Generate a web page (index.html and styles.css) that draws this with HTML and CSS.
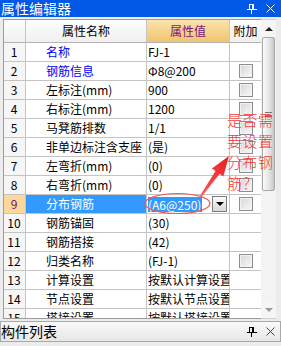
FILE: index.html
```html
<!DOCTYPE html>
<html lang="zh-CN">
<head>
  <meta charset="UTF-8">
  <title>属性编辑器</title>
  <link rel="stylesheet" href="styles.css">
</head>
<body>
  <!--TITLE BAR-->
  <div class="titlebar">
    <span class="title">属性编辑器</span>
    <div class="tools">
      <svg class="pin" width="10" height="10" viewBox="0 0 10 10">
        <rect x="2.5" y="0.5" width="4" height="5" fill="none" stroke="#fff"/>
        <rect x="5" y="0" width="2" height="6" fill="#fff"/>
        <rect x="0" y="5" width="10" height="1" fill="#fff"/>
        <rect x="4" y="6" width="1" height="4" fill="#fff"/>
      </svg>
      <svg class="close" width="9" height="9" viewBox="0 0 9 9">
        <path d="M0.5 0.5 L8.5 8.5 M8.5 0.5 L0.5 8.5" stroke="#fff" stroke-width="1"/>
      </svg>
    </div>
  </div>

  <!--PROPERTY GRID-->
  <div class="editor-body">
    <div class="grid">
      <div class="cell head"></div>
      <div class="cell head center">属性名称</div>
      <div class="cell head value-head center">属性值</div>
      <div class="cell head center">附加</div>

      <div class="cell num">1</div>
      <div class="cell name blue">名称</div>
      <div class="cell val">FJ-1</div>
      <div class="cell extra"></div>

      <div class="cell num">2</div>
      <div class="cell name blue">钢筋信息</div>
      <div class="cell val">Φ8@200</div>
      <div class="cell extra"><span class="chk"></span></div>

      <div class="cell num">3</div>
      <div class="cell name">左标注(mm)</div>
      <div class="cell val">900</div>
      <div class="cell extra"><span class="chk"></span></div>

      <div class="cell num">4</div>
      <div class="cell name">右标注(mm)</div>
      <div class="cell val">1200</div>
      <div class="cell extra"><span class="chk"></span></div>

      <div class="cell num">5</div>
      <div class="cell name">马凳筋排数</div>
      <div class="cell val">1/1</div>
      <div class="cell extra"><span class="chk"></span></div>

      <div class="cell num">6</div>
      <div class="cell name">非单边标注含支座</div>
      <div class="cell val">(是)</div>
      <div class="cell extra"><span class="chk"></span></div>

      <div class="cell num">7</div>
      <div class="cell name">左弯折(mm)</div>
      <div class="cell val">(0)</div>
      <div class="cell extra"><span class="chk"></span></div>

      <div class="cell num">8</div>
      <div class="cell name">右弯折(mm)</div>
      <div class="cell val">(0)</div>
      <div class="cell extra"><span class="chk"></span></div>

      <div class="cell num current">9</div>
      <div class="cell name selected">分布钢筋</div>
      <div class="cell val editing">
        <span class="sel-text">(A6@250)</span><span class="caret"></span>
        <span class="drop-btn"><span class="tri"></span></span>
      </div>
      <div class="cell extra"><span class="chk"></span></div>

      <div class="cell num">10</div>
      <div class="cell name">钢筋锚固</div>
      <div class="cell val">(30)</div>
      <div class="cell extra"></div>

      <div class="cell num">11</div>
      <div class="cell name">钢筋搭接</div>
      <div class="cell val">(42)</div>
      <div class="cell extra"></div>

      <div class="cell num">12</div>
      <div class="cell name">归类名称</div>
      <div class="cell val">(FJ-1)</div>
      <div class="cell extra"><span class="chk"></span></div>

      <div class="cell num">13</div>
      <div class="cell name">计算设置</div>
      <div class="cell val">按默认计算设置</div>
      <div class="cell extra"></div>

      <div class="cell num">14</div>
      <div class="cell name">节点设置</div>
      <div class="cell val">按默认节点设置</div>
      <div class="cell extra"></div>

      <div class="cell num">15</div>
      <div class="cell name">搭接设置</div>
      <div class="cell val">按默认搭接设置</div>
      <div class="cell extra"></div>
    </div>

    <div class="scrollbar">
      <div class="sb-btn"><span class="up"></span></div>
      <div class="sb-thumb"><span class="grip"></span></div>
      <div class="sb-track"></div>
      <div class="sb-btn"><span class="down"></span></div>
    </div>
  </div>

  <!--SECOND PANEL-->
  <div class="list-bar">
    <span class="title">构件列表</span>
    <div class="tools">
      <svg class="pin" width="10" height="10" viewBox="0 0 10 10">
        <rect x="2.5" y="0.5" width="4" height="5" fill="none" stroke="#000"/>
        <rect x="5" y="0" width="2" height="6" fill="#000"/>
        <rect x="0" y="5" width="10" height="1" fill="#000"/>
        <rect x="4" y="6" width="1" height="4" fill="#000"/>
      </svg>
      <svg class="close" width="9" height="9" viewBox="0 0 9 9">
        <path d="M0.5 0.5 L8.5 8.5 M8.5 0.5 L0.5 8.5" stroke="#444" stroke-width="1"/>
      </svg>
    </div>
  </div>

  <!--ANNOTATION ON TOP-->
  <svg class="markup" width="281" height="346" viewBox="0 0 281 346">
    <defs>
      <linearGradient id="arrowFill" x1="0" y1="1" x2="1" y2="0">
        <stop offset="0" stop-color="#ff5a5a"/>
        <stop offset="1" stop-color="#e81c1c"/>
      </linearGradient>
    </defs>
    <ellipse cx="177.5" cy="203.5" rx="32.5" ry="10" fill="none" stroke="#ef5858" stroke-width="1.2"/>
    <polygon fill="url(#arrowFill)"
      points="201.8,196.6 219.6,173.8 223.3,176.4 229,156 211.9,168.4 215.5,171 200.2,195.4"/>
  </svg>
  <div class="note">是否需<br>要设置<br>分布钢<br>筋？</div>
</body>
</html>
```

FILE: styles.css
```css
* {
  margin: 0;
  padding: 0;
  box-sizing: border-box;
}

body {
  width: 281px;
  height: 346px;
  overflow: hidden;
  position: relative;
  background-color: #ececec;
  font-family: "Noto Sans CJK SC", "DejaVu Sans", sans-serif;
  font-size: 12px;
  color: #000;
}

/* title bars */
.titlebar {
  height: 17px;
  background-color: #0058e6;
  color: #fff;
  display: flex;
  align-items: center;
  padding-left: 1px;
}

.titlebar .title,
.list-bar .title {
  font-size: 14px;
  line-height: 17px;
}

.tools {
  margin-left: auto;
  display: flex;
  align-items: center;
  gap: 9px;
  padding-right: 6px;
}

.list-bar {
  margin-top: 2px;
  height: 21px;
  border: 1px solid #a9a9a9;
  background: linear-gradient(#f9f9f9, #e7e7e7);
  display: flex;
  align-items: center;
}

.list-bar .tools {
  padding-right: 5px;
}

/* grid */
.editor-body {
  display: flex;
  margin: 2px 5px 0 3px;
  height: 300px;
}

.grid {
  width: 259px;
  height: 300px;
  overflow: hidden;
  border: 1px solid #9c9c9c;
  border-right: none;
  background-color: #fff;
  display: grid;
  grid-template-columns: 22px 121px 83px 32px;
  grid-template-rows: 23px;
  grid-auto-rows: 19px;
}

.cell {
  border-right: 1px solid #c4c4c4;
  border-bottom: 1px solid #c4c4c4;
  white-space: nowrap;
  overflow: hidden;
  display: flex;
  align-items: center;
  line-height: 18px;
}

.head {
  background: linear-gradient(#fdfdfd, #f0f0f0);
  border-bottom-color: #b4b4b4;
}

.center {
  justify-content: center;
}

.value-head {
  background: linear-gradient(#fbe3ae, #f1c46c);
  color: #7a1580;
}

.num {
  background-color: #f6f6f6;
  justify-content: center;
  padding-right: 1px;
}

.num.current {
  background-color: #fdd89b;
  color: #6a1076;
}

.name {
  padding-left: 20px;
}

.name.blue {
  color: #0000ff;
}

.name.selected {
  background-color: #3399ff;
  color: #fff;
}

.val {
  padding-left: 1px;
}

.extra {
  justify-content: center;
}

.chk {
  width: 14px;
  height: 14px;
  border: 1px solid #8e8e8e;
  background: linear-gradient(135deg, #d6d6d6, #f9f9f9);
  box-shadow: inset 0 0 0 1px #f2f2f2;
}

/* row 9 in-place editor */
.editing {
  padding-left: 1px;
}

.sel-text {
  background-color: #3399ff;
  color: #fff;
  line-height: 15px;
}

.caret {
  width: 1px;
  height: 15px;
  background-color: #c07020;
}

.drop-btn {
  margin-left: auto;
  margin-right: 2px;
  width: 15px;
  height: 16px;
  border: 1px solid #7c7c7c;
  background: linear-gradient(#fafafa, #d8d8d8);
  display: flex;
  align-items: center;
  justify-content: center;
}

.tri {
  width: 0;
  height: 0;
  border-left: 4px solid transparent;
  border-right: 4px solid transparent;
  border-top: 4px solid #000;
}

/* scrollbar */
.scrollbar {
  width: 15px;
  height: 300px;
  background-color: #f3f3f3;
  border-top: 1px solid #d0d0d0;
  border-bottom: 1px solid #d0d0d0;
  display: flex;
  flex-direction: column;
}

.sb-btn {
  height: 17px;
  display: flex;
  align-items: center;
  justify-content: center;
  background-color: #f5f5f5;
}

.sb-btn .up {
  border-left: 4px solid transparent;
  border-right: 4px solid transparent;
  border-bottom: 4px solid #222;
}

.sb-btn .down {
  border-left: 4px solid transparent;
  border-right: 4px solid transparent;
  border-top: 4px solid #999;
}

.sb-thumb {
  height: 154px;
  margin: 0 1px;
  border: 1px solid #a8a8a8;
  border-radius: 2px;
  background: linear-gradient(90deg, #fbfbfb, #e2e2e2 60%, #c8c8c8);
  display: flex;
  align-items: center;
  justify-content: center;
}

.grip {
  width: 7px;
  height: 5px;
  border-top: 1px solid #777;
  border-bottom: 1px solid #777;
  background: linear-gradient(#fff 1px, #777 1px, #777 2px, transparent 2px) 0 1px / 7px 3px no-repeat;
}

.sb-track {
  flex: 1;
}

/* red markup */
.markup {
  position: absolute;
  left: 0;
  top: 0;
  pointer-events: none;
}

.note {
  position: absolute;
  left: 227px;
  top: 109px;
  color: #f43a3a;
  font-size: 15px;
  font-weight: 300;
  line-height: 21px;
  letter-spacing: 0.5px;
}
```
